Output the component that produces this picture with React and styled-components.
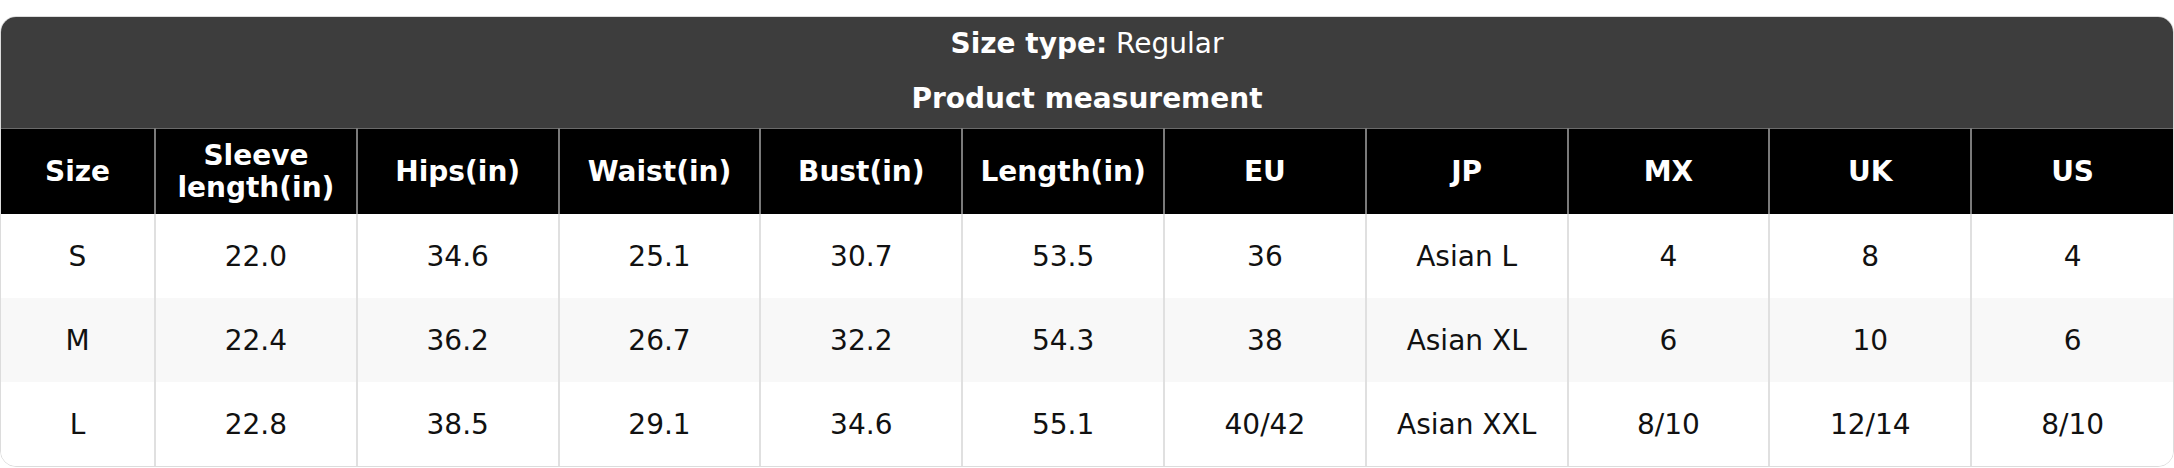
import React from "react";
import styled, { createGlobalStyle } from "styled-components";

const Global = createGlobalStyle`
  html, body { margin: 0; padding: 0; background: #fff; }
  body { font-family: "DejaVu Sans", Verdana, sans-serif; }
`;

const Page = styled.div`
  padding-top: 16px;
`;

const Card = styled.div`
  width: 2174px;
  box-sizing: border-box;
  border: 1.5px solid #dcdcdc;
  border-radius: 16px;
  overflow: hidden;
  background: #fff;
`;

const Banner = styled.div`
  background: #3d3d3d;
  color: #fff;
  display: flex;
  flex-direction: column;
  align-items: center;
  gap: 23px;
  padding: 11px 0 13px;
  font-size: 28px;
  line-height: 32px;
`;

const BannerLine = styled.div`
  font-weight: ${(p) => (p.$bold ? 700 : 400)};
  b { font-weight: 700; }
`;

const Table = styled.table`
  width: 100%;
  border-collapse: collapse;
  table-layout: fixed;
  font-size: 28px;
  line-height: 32px;
`;

const HeadCell = styled.th`
  background: #000;
  color: #fff;
  font-weight: 700;
  text-align: center;
  padding: 11px 6px 9px;
  height: 85px;
  box-sizing: border-box;
  border-top: 1.5px solid #6a6a6a;
  border-left: 2px solid #7a7a7a;
  border-right: 2px solid #7a7a7a;
  &:first-child { border-left: none; }
  &:last-child { border-right: none; }
`;

const Row = styled.tr`
  background: ${(p) => (p.$alt ? "#f8f8f8" : "#fff")};
`;

const Cell = styled.td`
  text-align: center;
  color: #111;
  padding: 27px 6px 25px;
  border-left: 2px solid #e0e0e0;
  border-right: 2px solid #e0e0e0;
  &:first-child { border-left: none; }
  &:last-child { border-right: none; }
`;

const headers = [
  "Size",
  "Sleeve length(in)",
  "Hips(in)",
  "Waist(in)",
  "Bust(in)",
  "Length(in)",
  "EU",
  "JP",
  "MX",
  "UK",
  "US",
];

const rows = [
  ["S", "22.0", "34.6", "25.1", "30.7", "53.5", "36", "Asian L", "4", "8", "4"],
  ["M", "22.4", "36.2", "26.7", "32.2", "54.3", "38", "Asian XL", "6", "10", "6"],
  ["L", "22.8", "38.5", "29.1", "34.6", "55.1", "40/42", "Asian XXL", "8/10", "12/14", "8/10"],
];

export default function App() {
  return (
    <Page>
      <Global />
      <Card>
        <Banner>
          <BannerLine>
            <b>Size type:</b> Regular
          </BannerLine>
          <BannerLine $bold>Product measurement</BannerLine>
        </Banner>
        <Table>
          <colgroup>
            <col style={{ width: "154px" }} />
            {headers.slice(1).map((h) => (
              <col key={h} />
            ))}
          </colgroup>
          <thead>
            <tr>
              {headers.map((h) => (
                <HeadCell key={h}>{h}</HeadCell>
              ))}
            </tr>
          </thead>
          <tbody>
            {rows.map((r, i) => (
              <Row key={r[0]} $alt={i % 2 === 1}>
                {r.map((c, j) => (
                  <Cell key={j}>{c}</Cell>
                ))}
              </Row>
            ))}
          </tbody>
        </Table>
      </Card>
    </Page>
  );
}
